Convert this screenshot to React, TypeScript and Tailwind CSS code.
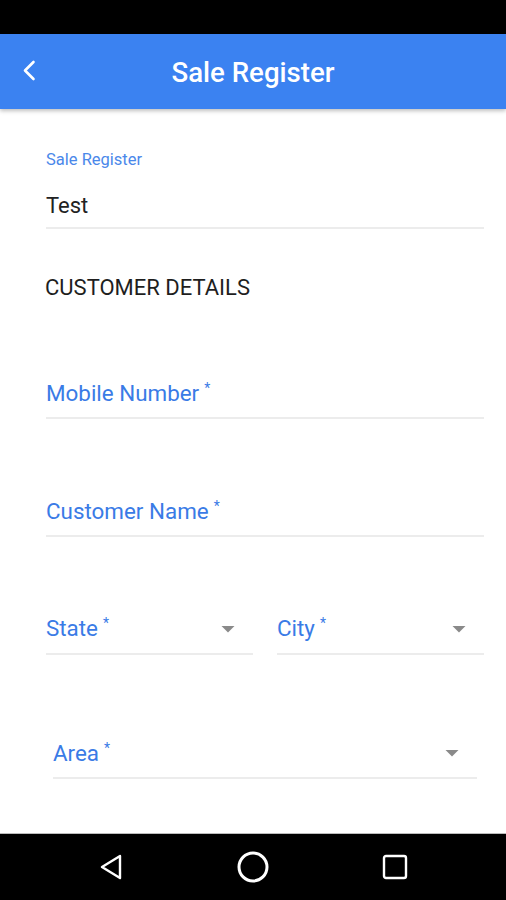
import React from 'react';

const font = { fontFamily: 'Roboto, "Noto Sans", sans-serif' };

const Caret = () => (
  <svg width="16" height="10" viewBox="0 0 16 10" className="shrink-0">
    <path d="M1.5 2 L14.5 2 L8 8.5 Z" fill="#8a8a8a" />
  </svg>
);

const Label: React.FC<{ text: string }> = ({ text }) => (
  <span className="text-[22.4px] leading-none text-[#3a7be6]">
    {text}
    <span className="ml-[5px] text-[14px] relative top-[-8px]">*</span>
  </span>
);

const Field: React.FC<{ text: string; select?: boolean; className?: string }> = ({ text, select, className }) => (
  <div className={`flex items-center justify-between border-b-2 border-[#ececec] pb-[13px] ${className ?? ''}`}>
    <Label text={text} />
    {select && <span className="mr-[17px]"><Caret /></span>}
  </div>
);

export default function App() {
  return (
    <div className="w-[506px] h-[900px] bg-white flex flex-col overflow-hidden" style={font}>
      <div className="h-[34px] bg-black shrink-0" />
      <div className="h-[75px] bg-[#3b82f1] shrink-0 flex items-center relative shadow-[0_2px_4px_rgba(0,0,0,0.25)] z-10">
        <svg width="16" height="24" viewBox="0 0 16 24" className="absolute left-[21px] top-[25px]">
          <path d="M12.5 3 L4 11.5 L12.5 20" stroke="white" strokeWidth="2.6" fill="none" strokeLinecap="round" strokeLinejoin="round" />
        </svg>
        <h1 className="w-full text-center text-white text-[27.6px] leading-none font-medium pt-[2px]">Sale Register</h1>
      </div>

      <div className="flex-1 flex flex-col pl-[46px] pr-[22px] pt-[43px]">
        <div className="text-[16.5px] leading-none text-[#4a88ea]">Sale Register</div>
        <div className="mt-[26px] text-[22px] leading-none text-[#222] pb-[10px] border-b-2 border-[#ececec]">Test</div>

        <div className="mt-[48px] text-[22px] leading-none text-[#1e1e1e] -ml-[1px]">CUSTOMER DETAILS</div>

        <Field text="Mobile Number" className="mt-[83px]" />
        <Field text="Customer Name" className="mt-[81px]" />

        <div className="mt-[80px] grid grid-cols-2 gap-[24px]">
          <Field text="State" select />
          <Field text="City" select />
        </div>

        <Field text="Area" select className="mt-[87px] mx-[7px]" />
      </div>

      <div className="h-[67px] bg-black shrink-0 flex items-center justify-between px-[98px] border-t border-[#bbb]">
        <svg width="26" height="28" viewBox="0 0 26 28">
          <path d="M22 3 L4 14 L22 25 Z" stroke="white" strokeWidth="2.4" fill="none" strokeLinejoin="round" />
        </svg>
        <svg width="34" height="34" viewBox="0 0 34 34">
          <circle cx="17" cy="17" r="14" stroke="white" strokeWidth="3" fill="none" />
        </svg>
        <svg width="26" height="26" viewBox="0 0 26 26">
          <rect x="2" y="2" width="22" height="22" rx="2" stroke="white" strokeWidth="2.4" fill="none" />
        </svg>
      </div>
    </div>
  );
}
